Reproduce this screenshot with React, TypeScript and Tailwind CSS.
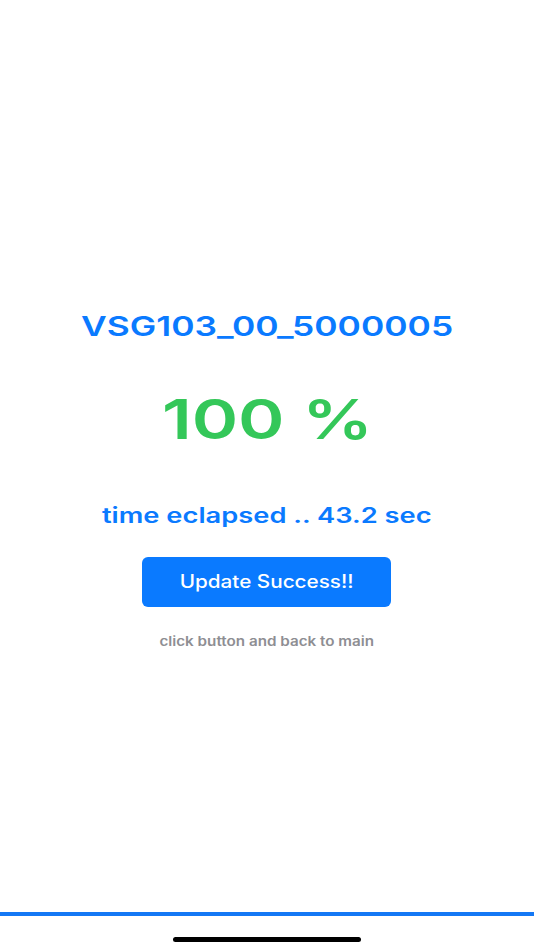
export default function App() {
  const font = { fontFamily: 'Inter, "Noto Sans", sans-serif' };
  return (
    <div
      className="w-[534px] h-[950px] bg-white flex flex-col items-center overflow-hidden"
      style={font}
    >
      <div className="flex flex-col items-center pt-[313px]">
        <div className="text-[27px] leading-none font-semibold text-[#0a7aff] scale-x-[1.31]">
          VSG103_00_5000005
        </div>
        <div className="mt-[52px] text-[55px] leading-none font-semibold text-[#34c759] scale-x-[1.28]">
          100 %
        </div>
        <div className="mt-[58px] text-[21px] leading-none font-semibold text-[#0a7aff] scale-x-[1.3]">
          time eclapsed .. 43.2 sec
        </div>
        <button className="mt-[31px] w-[249px] h-[50px] rounded-[6px] bg-[#0a7aff] flex items-center justify-center">
          <span className="text-[18px] leading-none font-medium text-white scale-x-[1.15]">
            Update Success!!
          </span>
        </button>
        <div className="mt-[28px] text-[13px] leading-none font-semibold text-[#8e8e93] scale-x-[1.17]">
          click button and back to main
        </div>
      </div>
      <div className="mt-auto w-full flex flex-col items-center">
        <div className="w-full h-[4px] bg-[#1478f5]" />
        <div className="mt-[21px] mb-[8px] w-[188px] h-[5px] rounded-full bg-black" />
      </div>
    </div>
  );
}
